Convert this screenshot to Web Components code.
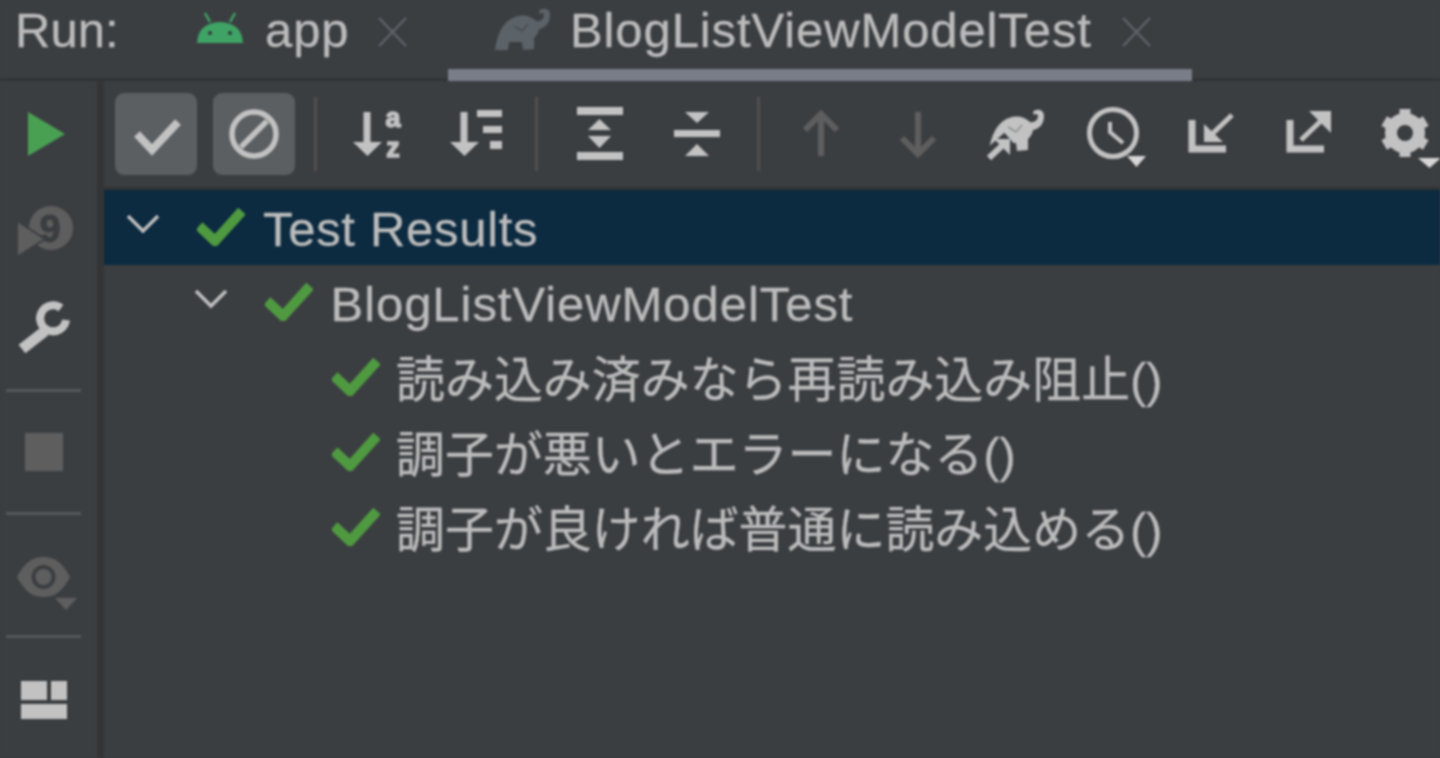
<!DOCTYPE html>
<html lang="ja">
<head>
<meta charset="utf-8">
<title>Run</title>
<style>
  html, body { margin: 0; height: 100%; background: #3b3e41; overflow: hidden; }
</style>
</head>
<body>
<run-window>
  <run-tab slot="tabs" icon="android">app</run-tab>
  <run-tab slot="tabs" icon="elephant" active>BlogListViewModelTest</run-tab>

  <tool-btn slot="side" icon="play"></tool-btn>
  <tool-btn slot="side" icon="rerun"></tool-btn>
  <tool-btn slot="side" icon="wrench"></tool-btn>
  <tool-sep slot="side" vertical></tool-sep>
  <tool-btn slot="side" icon="stop"></tool-btn>
  <tool-sep slot="side" vertical></tool-sep>
  <tool-btn slot="side" icon="eye"></tool-btn>
  <tool-sep slot="side" vertical></tool-sep>
  <tool-btn slot="side" icon="layout"></tool-btn>

  <tool-btn slot="tools" icon="check" on></tool-btn>
  <tool-btn slot="tools" icon="ban" on></tool-btn>
  <tool-sep slot="tools"></tool-sep>
  <tool-btn slot="tools" icon="sortaz"></tool-btn>
  <tool-btn slot="tools" icon="sorttime"></tool-btn>
  <tool-sep slot="tools"></tool-sep>
  <tool-btn slot="tools" icon="expand"></tool-btn>
  <tool-btn slot="tools" icon="collapse"></tool-btn>
  <tool-sep slot="tools"></tool-sep>
  <tool-btn slot="tools" icon="up"></tool-btn>
  <tool-btn slot="tools" icon="down"></tool-btn>
  <tool-btn slot="tools" icon="gradle"></tool-btn>
  <tool-btn slot="tools" icon="clock"></tool-btn>
  <tool-btn slot="tools" icon="import"></tool-btn>
  <tool-btn slot="tools" icon="export"></tool-btn>
  <tool-btn slot="tools" icon="gear"></tool-btn>

  <tree-row slot="tree" depth="0" open selected>Test Results</tree-row>
  <tree-row slot="tree" depth="1" open>BlogListViewModelTest</tree-row>
  <tree-row slot="tree" depth="2">読み込み済みなら再読み込み阻止()</tree-row>
  <tree-row slot="tree" depth="2">調子が悪いとエラーになる()</tree-row>
  <tree-row slot="tree" depth="2">調子が良ければ普通に読み込める()</tree-row>
</run-window>

<script>
const ELEPHANT = 'M0 43C2 28 8 14 20 10C28 7 36 9 41 14C45 15 49 12 49 8C49 6 47 5 45 7L44 4C47 0 55 1 55 8C55 16 50 21 44 22C43 27 41 29 39 31L39 42L28 43L27 35L14 35L13 43Z';
const EAR = 'M19 19L27 24L33 17';
const LIGHT = '#c2c2c2';
const DIM = '#5e5e5e';
const BG = '#3b3e41';

const ICONS = {
  play: `<polygon points="25,19 25,63 62,41" fill="#49a052"/>`,
  rerun: `<circle cx="48" cy="37" r="22" fill="${DIM}"/>
    <text x="47" y="51" font-size="38" font-weight="700" text-anchor="middle" fill="${BG}" stroke="${BG}" stroke-width="1">9</text>
    <polygon points="14,30 14,66 42,48" fill="${DIM}" stroke="${BG}" stroke-width="2"/>`,
  wrench: `<path d="M19 61L42 43" stroke="${LIGHT}" stroke-width="11" fill="none"/>
    <path d="M58 20A13 13 0 1 0 63 32" stroke="${LIGHT}" stroke-width="8" fill="none"/>`,
  stop: `<rect x="22" y="22" width="38" height="38" fill="${DIM}"/>`,
  eye: `<path d="M14 43C22 28 30 23 40.500 23C51 23 59 28 67 43C59 58 51 63 40.500 63C30 63 22 58 14 43Z" fill="${DIM}"/>
    <circle cx="40.500" cy="43" r="12" fill="${BG}"/><circle cx="40.500" cy="43" r="8" fill="${DIM}"/>
    <polygon points="52,64 74,64 63,76" fill="${DIM}"/>`,
  layout: `<g fill="${LIGHT}"><rect x="18" y="24" width="26" height="19"/><rect x="48" y="24" width="16" height="19"/><rect x="18" y="47" width="46" height="15"/></g>`,
  check: `<polyline points="22,41 37,57 63,29" fill="none" stroke="${LIGHT}" stroke-width="8"/>`,
  ban: `<circle cx="41" cy="41" r="22" fill="none" stroke="${LIGHT}" stroke-width="5.500"/><path d="M28 54L54 28" stroke="${LIGHT}" stroke-width="5.500"/>`,
  sortaz: `<path d="M30 19V52" stroke="${LIGHT}" stroke-width="7"/><polygon points="16,49 45,49 30.500,63" fill="${LIGHT}"/>
    <g font-size="27" font-weight="700" text-anchor="middle" fill="${LIGHT}" stroke="${LIGHT}" stroke-width="1.400"><text x="56" y="34">a</text><text x="56" y="64">z</text></g>`,
  sorttime: `<path d="M30 19V52" stroke="${LIGHT}" stroke-width="7"/><polygon points="16,49 45,49 30.500,63" fill="${LIGHT}"/>
    <g fill="${LIGHT}"><rect x="43" y="17" width="25" height="7"/><rect x="49" y="33" width="19" height="7"/><rect x="56" y="48" width="12" height="8"/></g>`,
  expand: `<g fill="${LIGHT}"><rect x="19" y="14" width="46" height="8"/><rect x="19" y="59" width="46" height="8"/>
    <polygon points="30,37 53,37 41.500,26"/><polygon points="30,43 53,43 41.500,55"/></g>`,
  collapse: `<g fill="${LIGHT}"><rect x="18" y="37" width="46" height="7"/>
    <polygon points="29,19 53,19 41,30"/><polygon points="41,51 29,63 53,63"/></g>`,
  up: `<path d="M41 63V21M25 37L41 21L57 37" fill="none" stroke="${DIM}" stroke-width="6"/>`,
  down: `<path d="M41 19V61M25 45L41 61L57 45" fill="none" stroke="${DIM}" stroke-width="6"/>`,
  gradle: `<svg x="14" y="15" width="56" height="44" viewBox="0 0 56 44" overflow="visible"><path d="${ELEPHANT}" fill="${LIGHT}"/><path d="${EAR}" fill="none" stroke="#8d8f90" stroke-width="1.500"/></svg>
    <path d="M8 68L34 45" stroke="${BG}" stroke-width="14"/>
    <path d="M14 65L30 50" stroke="${LIGHT}" stroke-width="6"/><polygon points="19,46 35,46 35,62" fill="${LIGHT}"/>`,
  clock: `<circle cx="41" cy="40" r="23.500" fill="none" stroke="${LIGHT}" stroke-width="5"/>
    <path d="M38 29V39L51 50" fill="none" stroke="${LIGHT}" stroke-width="4"/><polygon points="55,63 74,63 64.500,74" fill="#d6d6d6"/>`,
  import: `<path d="M22 27V56H56" fill="none" stroke="${LIGHT}" stroke-width="7"/><path d="M38 45L62 22" stroke="${LIGHT}" stroke-width="5"/>
    <polygon points="34,31 34,49 53,49" fill="${LIGHT}"/>`,
  export: `<path d="M23 27V56H57" fill="none" stroke="${LIGHT}" stroke-width="7"/><path d="M34 47L58 24" stroke="${LIGHT}" stroke-width="5"/>
    <polygon points="64,18 42,18 64,40" fill="${LIGHT}"/>`,
  gear: `<circle cx="40" cy="40" r="14" fill="none" stroke="${LIGHT}" stroke-width="12"/>
    <g stroke="${LIGHT}" stroke-width="11"><path d="M40 16V24M40 56V64M19.200 28L26 32M54 48L60.800 52M19.200 52L26 48M54 32L60.800 28"/></g>
    <polygon points="53,65 76,65 64.500,75" fill="#d6d6d6"/>`
};

class RunWindow extends HTMLElement {
  connectedCallback() {
    this.attachShadow({ mode: 'open' });
    this.shadowRoot.innerHTML = `
      <style>
        :host {
          display: grid;
          grid-template-rows: 81px 1fr;
          height: 758px;
          background: ${BG};
          color: #bbbbbb;
          font: 49px/1 "Liberation Sans", "Noto Sans CJK JP", sans-serif;
          -webkit-text-stroke: 0.3px #bbbbbb;
          filter: blur(0.8px);
          overflow: hidden;
        }
        .tabs {
          display: flex;
          box-sizing: border-box;
          height: 81px;
          border-bottom: 3px solid #313335;
        }
        .label {
          width: 150px;
          box-sizing: border-box;
          height: 60px;
          padding: 0 0 0 15px;
          display: flex;
          align-items: center;
        }
        .body {
          display: grid;
          grid-template-columns: 104px 1fr;
          min-height: 0;
        }
        .side {
          display: flex;
          flex-direction: column;
          align-items: flex-start;
          padding: 12px 0 0 3px;
          border-right: 7px solid #333436;
        }
        .main { min-width: 0; overflow: hidden; }
        .tools {
          display: flex;
          box-sizing: border-box;
          height: 109px;
          padding: 12px 0 0 11px;
          border-bottom: 3px solid #313335;
          white-space: nowrap;
        }
      </style>
      <div class="tabs">
        <span class="label">Run:</span>
        <slot name="tabs"></slot>
      </div>
      <div class="body">
        <div class="side"><slot name="side"></slot></div>
        <div class="main">
          <div class="tools"><slot name="tools"></slot></div>
          <slot name="tree"></slot>
        </div>
      </div>
    `;
  }
}

class RunTab extends HTMLElement {
  connectedCallback() {
    const android = this.getAttribute('icon') === 'android';
    const icon = android
      ? `<svg width="46" height="31" viewBox="0 0 46 31" style="margin-top:-6px">
           <path d="M8 1L13 10M38 1L33 10" stroke="#3ea365" stroke-width="2.500"/>
           <path d="M0 31Q1 11 23 10Q45 11 46 31Z" fill="#3ea365"/>
           <circle cx="13" cy="21" r="2" fill="#33363a"/><circle cx="33" cy="21" r="2" fill="#33363a"/>
         </svg>`
      : `<svg width="56" height="44" viewBox="0 0 56 44" style="margin-top:-2px"><path d="${ELEPHANT}" fill="#5c6368"/><path d="${EAR}" fill="none" stroke="#474b4f" stroke-width="1.500"/></svg>`;
    this.attachShadow({ mode: 'open' });
    this.shadowRoot.innerHTML = `
      <style>
        :host {
          display: flex;
          align-items: flex-start;
          box-sizing: border-box;
          height: 81px;
          padding: 0 41px 0 47px;
        }
        :host([active]) { border-bottom: 12px solid #787d87; }
        .in { display: flex; align-items: center; height: 60px; }
        .text { margin: 1px 29px 0 22px; letter-spacing: 0.9px; }
        :host([active]) .text { margin-left: 18.500px; margin-right: 30px; }
        .x { flex: none; margin-top: 4px; }
      </style>
      <div class="in">
        ${icon}
        <span class="text"><slot></slot></span>
        <svg class="x" width="29" height="30" viewBox="0 0 29 30"><path d="M1 1L28 29M28 1L1 29" stroke="#60676b" stroke-width="2"/></svg>
      </div>
    `;
  }
}

class ToolBtn extends HTMLElement {
  connectedCallback() {
    this.attachShadow({ mode: 'open' });
    this.shadowRoot.innerHTML = `
      <style>
        :host {
          display: block;
          flex: none;
          width: 82px;
          height: 82px;
          margin: 0 15.500px 15.500px 0;
          border-radius: 9px;
        }
        :host([on]) { background: #5b5f62; }
        svg { display: block; overflow: visible; font-family: "Liberation Sans", sans-serif; -webkit-text-stroke: 0; }
      </style>
      <svg width="82" height="82" viewBox="0 0 82 82">${ICONS[this.getAttribute('icon')] || ''}</svg>
    `;
  }
}

class ToolSep extends HTMLElement {
  connectedCallback() {
    this.attachShadow({ mode: 'open' });
    this.shadowRoot.innerHTML = `
      <style>
        :host {
          display: block;
          flex: none;
          width: 3px;
          height: 74px;
          margin: 4px 20px 0 3.500px;
          background: #504f4d;
        }
        :host([vertical]) {
          width: 75px;
          height: 3px;
          margin: 3.500px 0 19px 3px;
          background: #55585a;
        }
      </style>
    `;
  }
}

class TreeRow extends HTMLElement {
  connectedCallback() {
    const depth = Number(this.getAttribute('depth') || 0);
    const leaf = !this.hasAttribute('open');
    const chevron = leaf ? '' : `<path d="M2 2L17 17L32 2" fill="none" stroke="#c0c0c0" stroke-width="3.500"/>`;
    this.attachShadow({ mode: 'open' });
    this.shadowRoot.innerHTML = `
      <style>
        :host {
          display: flex;
          align-items: center;
          height: 75px;
          padding-left: ${22 + depth * 67.5}px;
          white-space: nowrap;
        }
        :host([selected]) { background: #0c2a40; }
        .chev { flex: none; margin: -8px 37px 0 0; }
        .check { flex: none; margin: -2px 18px 0 0; }
        .label { padding-top: 4px; letter-spacing: ${depth ? 0.95 : 0.7}px; }
        :host(:not([open])) .label { padding-top: 6px; margin-left: -2px; letter-spacing: 0; font-size: 48.950px; }
      </style>
      <svg class="chev" width="34" height="20" viewBox="0 0 34 20">${chevron}</svg>
      <svg class="check" width="48" height="38" viewBox="0 0 48 38"><polyline points="2,18 18,33 45,3" fill="none" stroke="#4f9a40" stroke-width="10"/></svg>
      <span class="label"><slot></slot></span>
    `;
  }
}

customElements.define('run-window', RunWindow);
customElements.define('run-tab', RunTab);
customElements.define('tool-btn', ToolBtn);
customElements.define('tool-sep', ToolSep);
customElements.define('tree-row', TreeRow);
</script>
</body>
</html>
